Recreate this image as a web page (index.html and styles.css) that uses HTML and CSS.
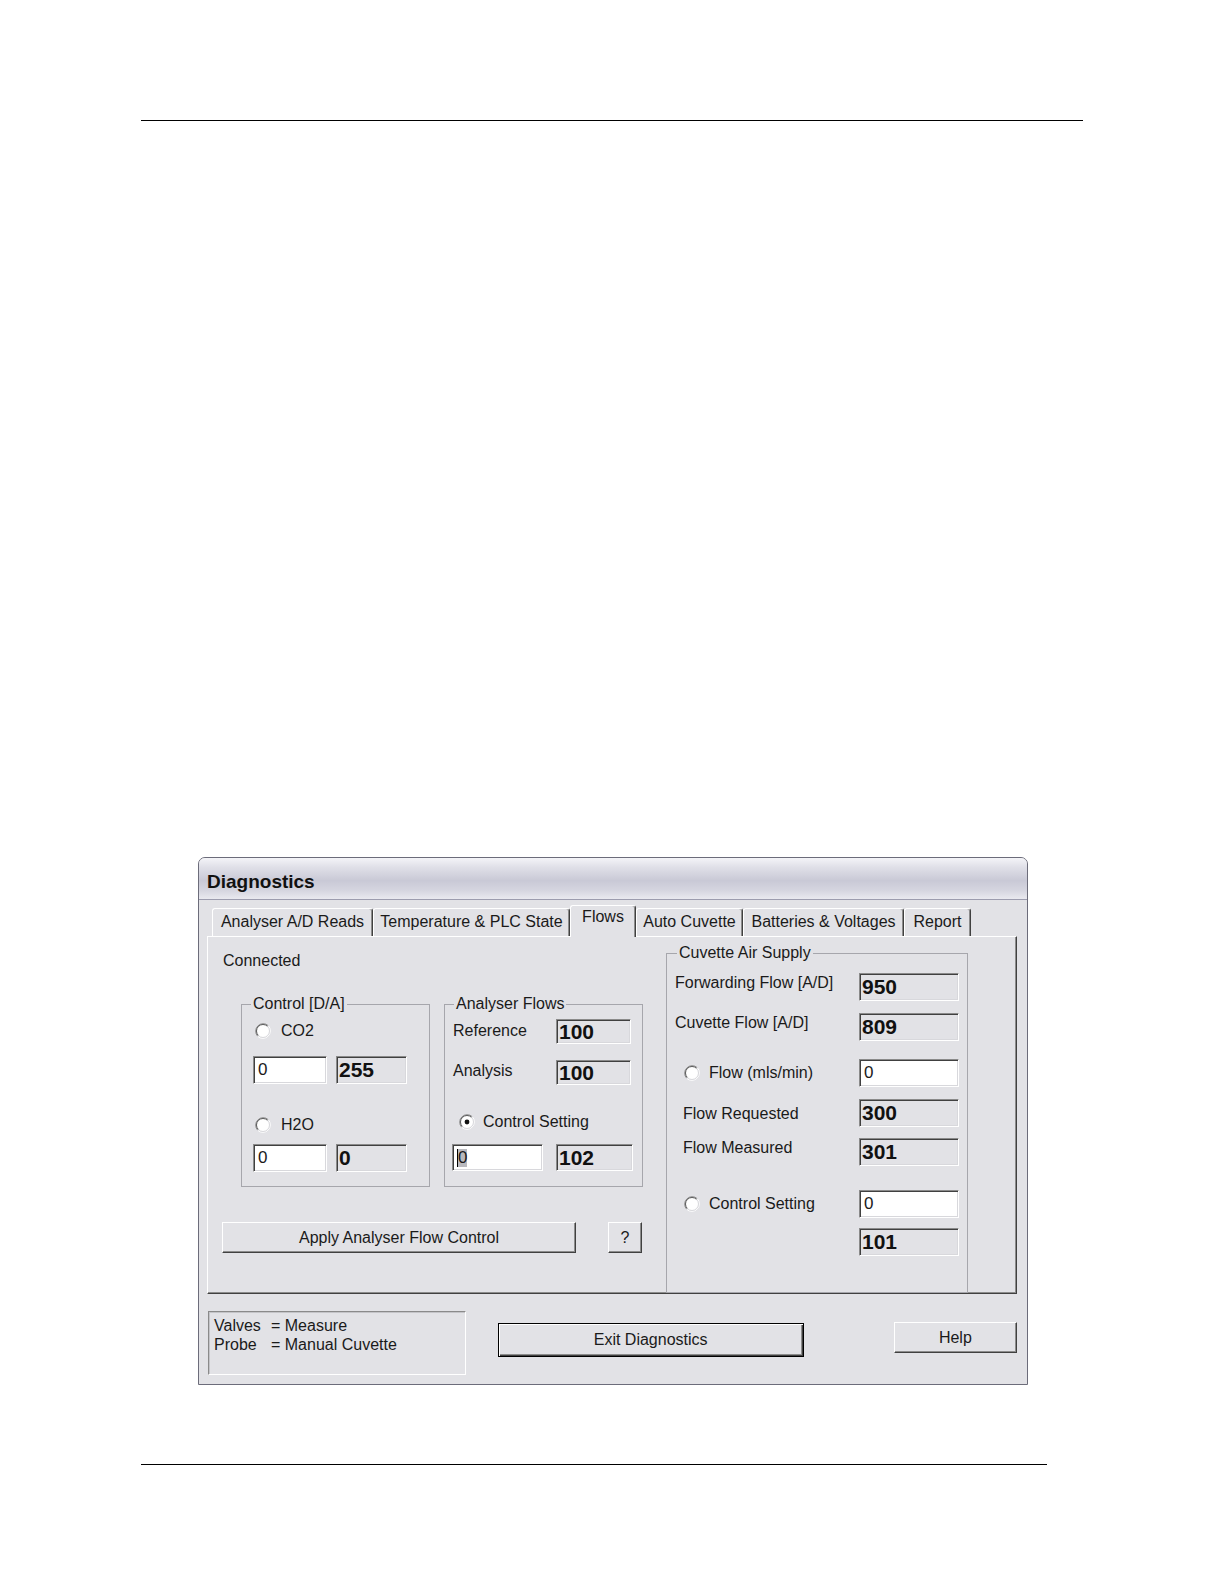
FILE: index.html
```html
<!DOCTYPE html>
<html>
<head>
<meta charset="utf-8">
<title>Diagnostics</title>
<link rel="stylesheet" href="styles.css">
</head>
<body>
<div class="page">
  <div class="rule rule-top"></div>
  <div class="dialog">
    <div class="titlebar">Diagnostics</div>
    <div class="client">
      <div class="tabs">
        <div class="tab t1">Analyser A/D Reads</div>
        <div class="tab t2">Temperature &amp; PLC State</div>
        <div class="tab t3 active">Flows</div>
        <div class="tab t4">Auto Cuvette</div>
        <div class="tab t5">Batteries &amp; Voltages</div>
        <div class="tab t6">Report</div>
      </div>
      <div class="panel">
        <div class="left">
          <div class="connected">Connected</div>
          <div class="groups">
            <fieldset class="group g-control">
              <legend>Control [D/A]</legend>
              <div class="radio-row r1">
                <svg class="radio" viewBox="0 0 16 16" width="16" height="16"><circle cx="8" cy="8" r="6.5" fill="#fff"/><path d="M2.7 13.3A7.5 7.5 0 0 1 13.3 2.7" fill="none" stroke="#8a8a8a"/><path d="M13.3 2.7A7.5 7.5 0 0 1 2.7 13.3" fill="none" stroke="#ffffff"/><path d="M3.4 12.6A6.5 6.5 0 0 1 12.6 3.4" fill="none" stroke="#5a5a5a"/><path d="M12.6 3.4A6.5 6.5 0 0 1 3.4 12.6" fill="none" stroke="#d8d8dc"/></svg>
                <span>CO2</span>
              </div>
              <div class="field-row f1"><div class="edit">0</div><div class="disp">255</div></div>
              <div class="radio-row r2">
                <svg class="radio" viewBox="0 0 16 16" width="16" height="16"><circle cx="8" cy="8" r="6.5" fill="#fff"/><path d="M2.7 13.3A7.5 7.5 0 0 1 13.3 2.7" fill="none" stroke="#8a8a8a"/><path d="M13.3 2.7A7.5 7.5 0 0 1 2.7 13.3" fill="none" stroke="#ffffff"/><path d="M3.4 12.6A6.5 6.5 0 0 1 12.6 3.4" fill="none" stroke="#5a5a5a"/><path d="M12.6 3.4A6.5 6.5 0 0 1 3.4 12.6" fill="none" stroke="#d8d8dc"/></svg>
                <span>H2O</span>
              </div>
              <div class="field-row f2"><div class="edit">0</div><div class="disp">0</div></div>
            </fieldset>
            <fieldset class="group g-flows">
              <legend>Analyser Flows</legend>
              <div class="kv-row k1"><span class="lbl">Reference</span><div class="disp">100</div></div>
              <div class="kv-row k2"><span class="lbl">Analysis</span><div class="disp">100</div></div>
              <div class="radio-row r3">
                <svg class="radio" viewBox="0 0 16 16" width="16" height="16"><circle cx="8" cy="8" r="6.5" fill="#fff"/><path d="M2.7 13.3A7.5 7.5 0 0 1 13.3 2.7" fill="none" stroke="#8a8a8a"/><path d="M13.3 2.7A7.5 7.5 0 0 1 2.7 13.3" fill="none" stroke="#ffffff"/><path d="M3.4 12.6A6.5 6.5 0 0 1 12.6 3.4" fill="none" stroke="#5a5a5a"/><path d="M12.6 3.4A6.5 6.5 0 0 1 3.4 12.6" fill="none" stroke="#d8d8dc"/><circle cx="8" cy="8" r="2.4" fill="#111"/></svg>
                <span>Control Setting</span>
              </div>
              <div class="field-row f3"><div class="edit wide"><span class="sel">0</span></div><div class="disp">102</div></div>
            </fieldset>
          </div>
          <div class="apply-row">
            <div class="btn apply">Apply Analyser Flow Control</div>
            <div class="btn qbtn">?</div>
          </div>
        </div>
        <fieldset class="group g-cuvette">
          <legend>Cuvette Air Supply</legend>
          <div class="crow c1"><span class="lbl">Forwarding Flow [A/D]</span><div class="disp">950</div></div>
          <div class="crow c2"><span class="lbl">Cuvette Flow [A/D]</span><div class="disp">809</div></div>
          <div class="crow c3 radio-line">
            <svg class="radio" viewBox="0 0 16 16" width="16" height="16"><circle cx="8" cy="8" r="6.5" fill="#fff"/><path d="M2.7 13.3A7.5 7.5 0 0 1 13.3 2.7" fill="none" stroke="#8a8a8a"/><path d="M13.3 2.7A7.5 7.5 0 0 1 2.7 13.3" fill="none" stroke="#ffffff"/><path d="M3.4 12.6A6.5 6.5 0 0 1 12.6 3.4" fill="none" stroke="#5a5a5a"/><path d="M12.6 3.4A6.5 6.5 0 0 1 3.4 12.6" fill="none" stroke="#d8d8dc"/></svg>
            <span class="lbl">Flow (mls/min)</span><div class="edit">0</div>
          </div>
          <div class="crow c4"><span class="lbl ind">Flow Requested</span><div class="disp">300</div></div>
          <div class="crow c5"><span class="lbl ind">Flow Measured</span><div class="disp">301</div></div>
          <div class="crow c6 radio-line">
            <svg class="radio" viewBox="0 0 16 16" width="16" height="16"><circle cx="8" cy="8" r="6.5" fill="#fff"/><path d="M2.7 13.3A7.5 7.5 0 0 1 13.3 2.7" fill="none" stroke="#8a8a8a"/><path d="M13.3 2.7A7.5 7.5 0 0 1 2.7 13.3" fill="none" stroke="#ffffff"/><path d="M3.4 12.6A6.5 6.5 0 0 1 12.6 3.4" fill="none" stroke="#5a5a5a"/><path d="M12.6 3.4A6.5 6.5 0 0 1 3.4 12.6" fill="none" stroke="#d8d8dc"/></svg>
            <span class="lbl">Control Setting</span><div class="edit">0</div>
          </div>
          <div class="crow c7"><span class="lbl"></span><div class="disp">101</div></div>
        </fieldset>
      </div>
      <div class="footer">
        <div class="status">
          <div class="sline"><span class="skey">Valves</span><span>= Measure</span></div>
          <div class="sline"><span class="skey">Probe</span><span>= Manual Cuvette</span></div>
        </div>
        <div class="btn exit">Exit Diagnostics</div>
        <div class="btn help">Help</div>
      </div>
    </div>
  </div>
  <div class="rule rule-bottom"></div>
</div>
</body>
</html>
```
FILE: styles.css
```css
* { box-sizing: border-box; }

body {
  margin: 0;
  background: #ffffff;
  font-family: "Liberation Sans", Arial, sans-serif;
  font-size: 16px;
  color: #1a1a1a;
}

.page {
  width: 1224px;
  height: 1584px;
  overflow: hidden;
  padding-top: 120px;
}

.rule {
  height: 1px;
  background: #000;
  margin-left: 141px;
}
.rule-top { width: 942px; }
.rule-bottom { width: 906px; margin-top: 79px; }

/* ---------- dialog window ---------- */
.dialog {
  margin-top: 736px;
  margin-left: 198px;
  width: 830px;
  height: 528px;
  border: 1px solid #6c6c7a;
  border-radius: 7px 7px 0 0;
  background: #e2e2e6;
  display: flex;
  flex-direction: column;
}

.titlebar {
  height: 42px;
  padding: 9px 0 0 8px;
  font-weight: bold;
  font-size: 19px;
  line-height: 30px;
  color: #111;
  border-bottom: 1px solid #9c9cae;
  border-radius: 6px 6px 0 0;
  background: linear-gradient(to bottom, #f4f4f8 0%, #e0e0e8 22%, #c9c9d6 55%, #d6d6e0 80%, #e9e9ef 100%);
}

.client {
  flex: 1;
  padding: 5px 10px 0 8px;
  display: flex;
  flex-direction: column;
}

/* ---------- tabs ---------- */
.tabs {
  display: flex;
  align-items: flex-end;
  height: 31px;
  padding-left: 5px;
  position: relative;
  z-index: 1;
}
.tab {
  height: 28px;
  padding-top: 4px;
  line-height: 18px;
  text-align: center;
  white-space: nowrap;
  border-top: 1px solid #fff;
  border-left: 1px solid #fff;
  border-right: 1px solid #404040;
  box-shadow: inset -1px 0 #8c8c8c;
  border-radius: 3px 3px 0 0;
  background: #e2e2e6;
}
.t1 { width: 161px; }
.t2 { width: 197px; }
.t3 { width: 66px; }
.t4 { width: 107px; }
.t5 { width: 161px; }
.t6 { width: 67px; }
.tab.active {
  height: 32px;
  margin-bottom: -1px;
  padding-top: 2px;
}

.panel {
  height: 358px;
  border: 1px solid;
  border-color: #fff #404040 #404040 #fff;
  box-shadow: inset -1px -1px #8c8c8c;
  display: flex;
}

.left {
  width: 458px;
  padding-top: 15px;
}
.connected {
  margin-left: 15px;
  line-height: 18px;
}
.groups {
  display: flex;
  gap: 14px;
  margin: 25px 0 0 33px;
}

/* ---------- group boxes ---------- */
.group {
  margin: 0;
  padding: 0;
  min-width: 0;
  border: 1px solid #a6a6ac;
}
.group legend {
  padding: 0 2px;
  line-height: 18px;
}

.g-control { width: 189px; padding-bottom: 14px; }
.g-control legend { margin-left: 9px; }
.g-flows { width: 199px; }
.g-flows legend { margin-left: 9px; }

.radio-row {
  display: flex;
  align-items: center;
  height: 18px;
  gap: 10px;
  line-height: 18px;
}
.radio { display: block; flex: none; }

.g-control .radio-row { margin-left: 13px; }
.g-control .r1 { margin-top: 9px; }
.g-control .r2 { margin-top: 32px; }

.field-row { display: flex; }
.g-control .field-row { gap: 9px; margin-left: 11px; }
.g-control .f1 { margin-top: 16px; }
.g-control .f2 { margin-top: 10px; }
.g-control .edit { width: 74px; height: 28px; }
.g-control .disp { width: 71px; height: 28px; }

/* sunken edit / display boxes */
.edit, .disp {
  border: 1px solid;
  border-color: #8a8a8a #fff #fff #8a8a8a;
  box-shadow: inset 1px 1px #404040, inset -1px -1px #d8d8dc;
  padding-left: 4px;
  display: flex;
  align-items: center;
}
.edit {
  background: #fff;
  font-size: 17px;
}
.disp {
  background: #e2e2e6;
  font-weight: bold;
  font-size: 21px;
  padding-left: 2px;
  color: #111;
}
.sel {
  background: #b9b9be;
  border-left: 1px solid #000;
  line-height: 18px;
}

.kv-row { display: flex; align-items: flex-start; }
.kv-row .lbl { width: 111px; padding-left: 8px; line-height: 18px; }
.kv-row .disp { width: 75px; height: 25px; }
.g-flows .k1 { margin-top: 6px; }
.g-flows .k1 .lbl { margin-top: 3px; }
.g-flows .k2 { margin-top: 16px; }
.g-flows .k2 .lbl { margin-top: 2px; }
.g-flows .r3 { margin-top: 28px; margin-left: 14px; gap: 8px; }
.g-flows .f3 { margin-top: 13px; margin-left: 7px; gap: 13px; }
.g-flows .edit { width: 91px; height: 27px; }
.g-flows .f3 .disp { width: 77px; height: 27px; }

.g-cuvette {
  width: 302px;
  margin-top: 7px;
  padding: 11px 0 18px 0;
}
.g-cuvette legend { margin-left: 10px; }
.crow {
  display: flex;
  align-items: flex-start;
  height: 28px;
}
.crow .lbl {
  flex: 1;
  padding-left: 8px;
  margin-top: 1px;
  line-height: 18px;
  white-space: nowrap;
}
.crow .lbl.ind { padding-left: 16px; }
.crow .disp, .crow .edit {
  width: 100px;
  height: 28px;
  margin-right: 8px;
}
.crow.radio-line {
  align-items: center;
  padding-left: 17px;
}
.crow.radio-line .lbl { padding-left: 9px; margin-top: 0; }
.c2 { margin-top: 12px; }
.c3 { margin-top: 18px; }
.c4 { margin-top: 12px; }
.c4 .lbl { margin-top: 6px; }
.c5 { margin-top: 11px; }
.c6 { margin-top: 24px; }
.c7 { margin-top: 10px; }

/* ---------- buttons ---------- */
.btn {
  border: 1px solid;
  border-color: #fff #404040 #404040 #fff;
  box-shadow: inset -1px -1px #8c8c8c;
  background: #e2e2e6;
  display: flex;
  align-items: center;
  justify-content: center;
  line-height: 18px;
}
.apply-row {
  display: flex;
  gap: 32px;
  margin: 35px 0 0 14px;
}
.apply { width: 354px; height: 31px; }
.qbtn { width: 34px; height: 31px; }

/* ---------- footer ---------- */
.footer {
  display: flex;
  align-items: flex-start;
  padding-top: 17px;
}
.status {
  margin-left: 1px;
  width: 259px;
  height: 64px;
  border: 1px solid;
  border-color: #8a8a8a #fff #fff #8a8a8a;
  box-shadow: inset 1px 1px #c4c4c8;
  padding: 4px 0 0 5px;
  line-height: 19px;
}
.skey { display: inline-block; width: 57px; }
.exit {
  margin-left: 32px;
  margin-top: 12px;
  width: 308px;
  height: 34px;
  border: 1px solid #000;
  box-shadow: inset 1px 1px #fff, inset -1px -1px #404040, inset -2px -2px #8c8c8c;
}
.help {
  margin-left: 90px;
  margin-top: 11px;
  width: 124px;
  height: 31px;
}
```
